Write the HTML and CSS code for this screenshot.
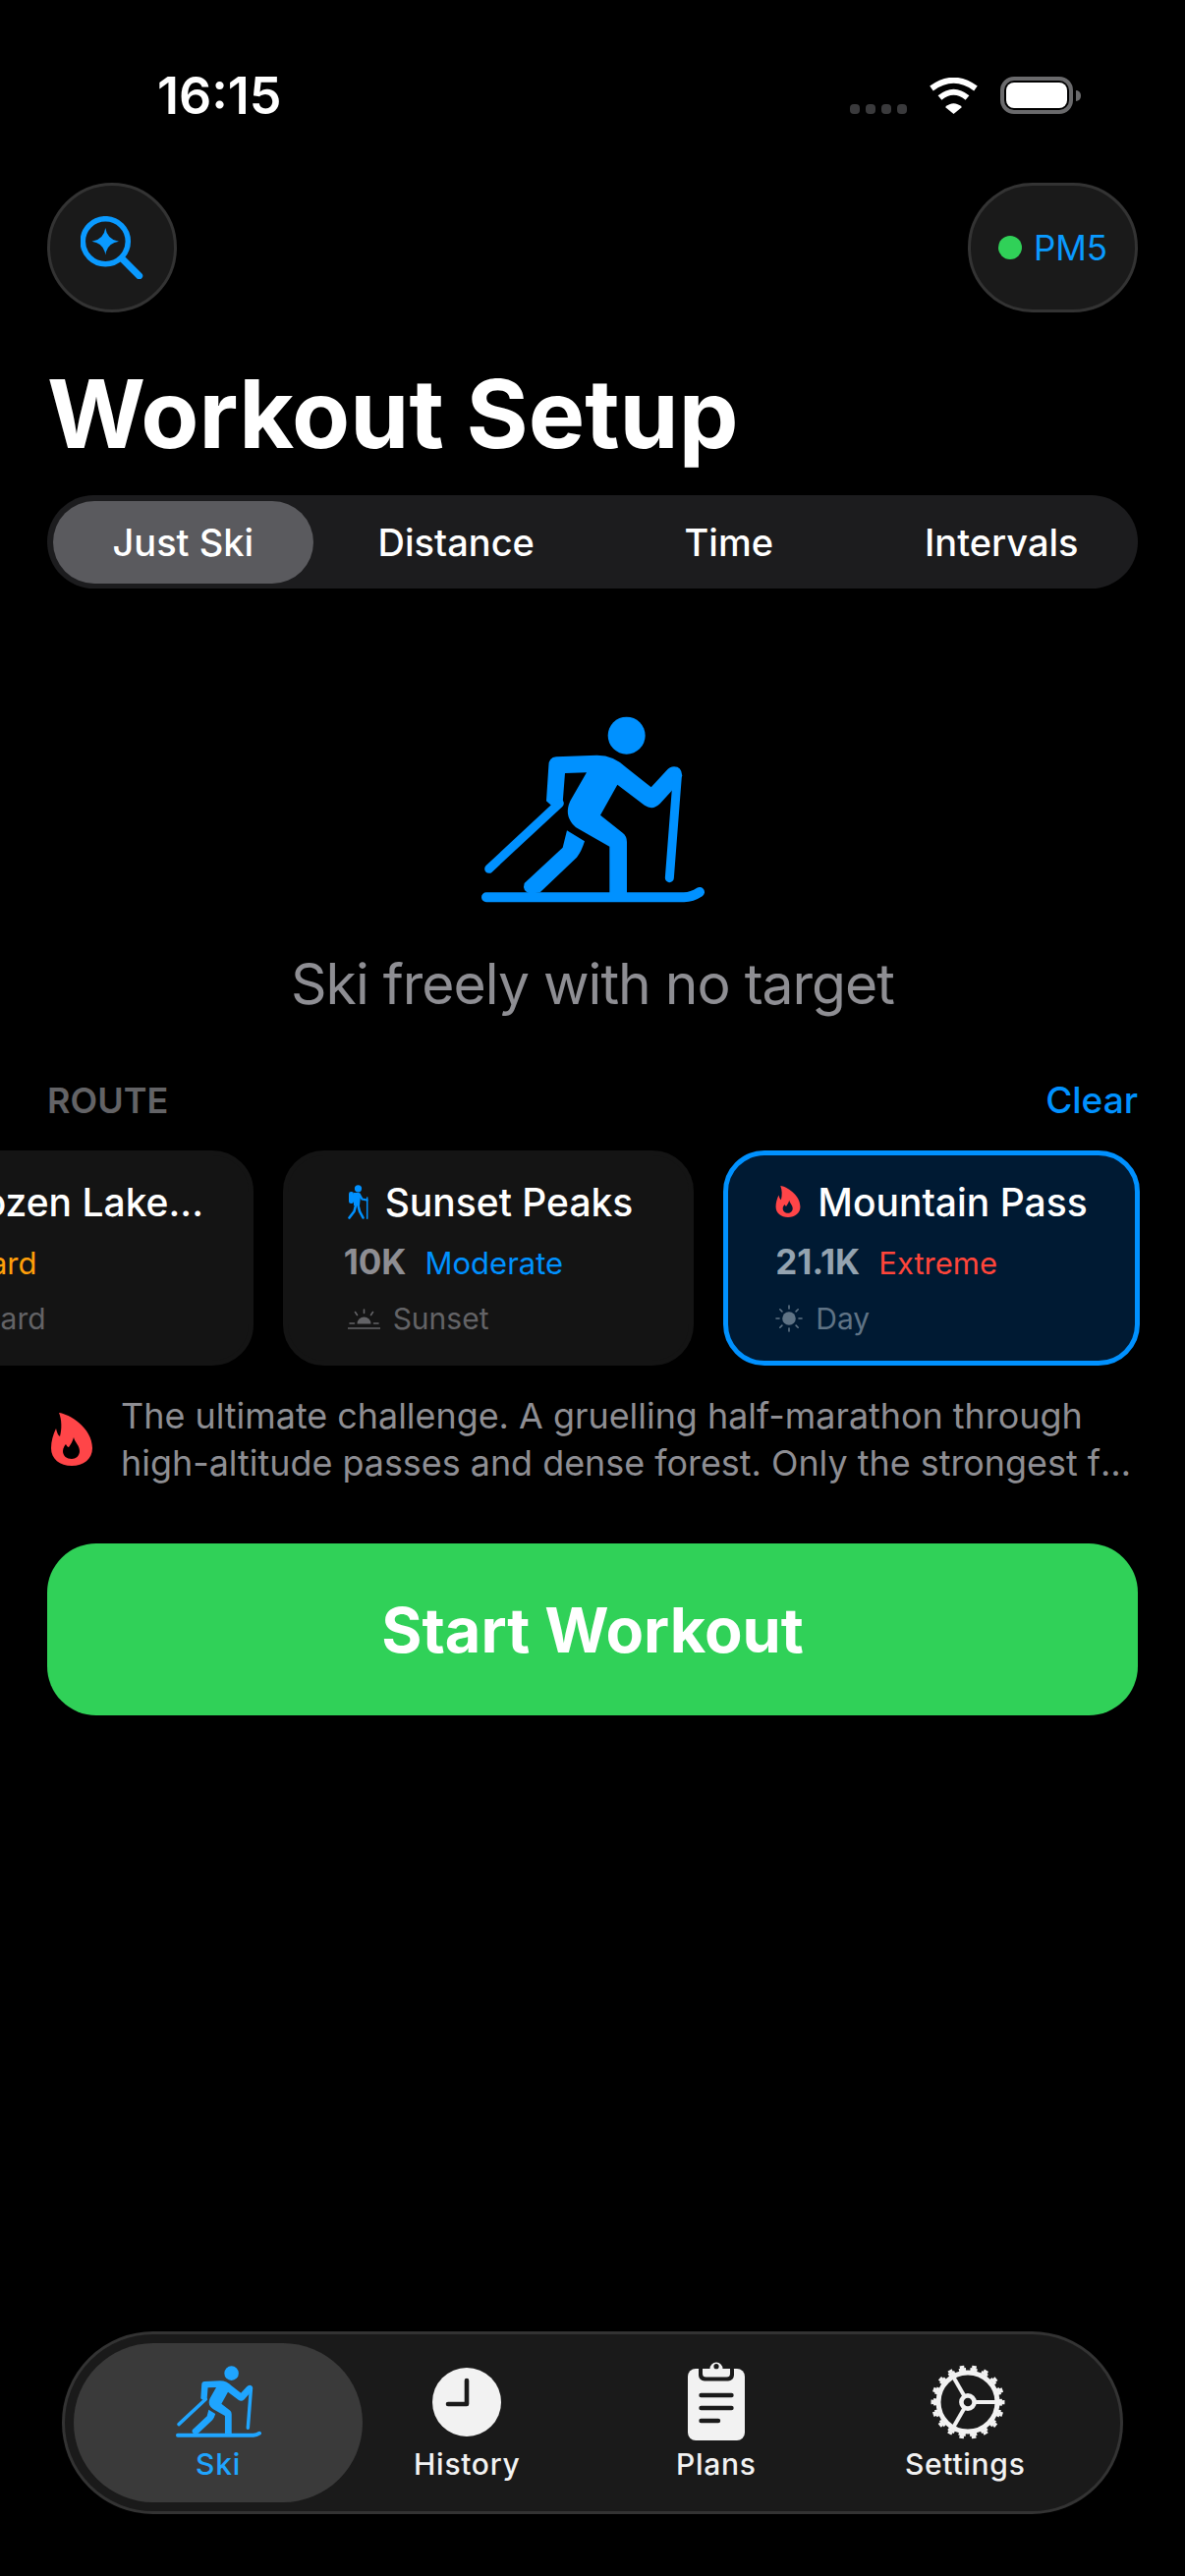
FILE: index.html
```html
<!DOCTYPE html>
<html lang="en">
<head>
    <meta charset="UTF-8">
    <meta name="viewport" content="width=device-width, initial-scale=1.0">
    <title>Workout Setup</title>
    <link rel="stylesheet" href="styles.css">
</head>
<body>
    <svg class="defs" width="0" height="0">
        <symbol id="skier" viewBox="147 87 681 568">
            <circle cx="590" cy="145" r="57" fill="currentColor"/>
            <path fill="currentColor" d="M375 210 Q352 212 352 238 L345 345 L360 358 L395 350 L402 260 L468 258 L418 345 Q400 385 425 415 Q432 424 445 431 L538 484 L538 630 L591 630 L591 470 Q591 452 578 442 L510 388 L562 295 L645 358 Q670 375 692 353 L727 315 L760 268 Q758 240 735 240 Q722 240 712 252 L665 303 L592 245 Q552 205 500 205 Z"/>
            <path fill="currentColor" d="M408 435 L462 468 Q452 500 438 517 L326 624 L296 628 Q270 620 278 596 L395 487 Z"/>
            <g fill="none" stroke="currentColor" stroke-linecap="round">
                <path stroke-width="27" d="M170 552 L385 352"/>
                <path stroke-width="27" d="M721 580 L745 270"/>
                <path stroke-width="30" d="M162 639 H765 Q790 638 813 623"/>
            </g>
        </symbol>
        <symbol id="flame" viewBox="0 0 42 54">
            <path fill="currentColor" fill-rule="evenodd" d="M8 0C18 1 42 15 42 36C42 47 33 54 21 54C9 54 0 47 0 36C0 29 2 22 5 16C6 20 7 23 9 24C11 17 11 7 8 0ZM23 25C24 30 29 33 29 39C29 44 25 47 21 47C16 47 12 44 12 39C12 36 14 33 15 32C16 34 17 35 18 35C20 32 22 29 23 25Z"/>
        </symbol>
    </svg>

    <div class="status">
        <span class="clock">16:15</span>
        <div class="status-icons">
            <div class="signal"><i></i><i></i><i></i><i></i></div>
            <svg class="wifi" viewBox="0 0 51 37">
                <g fill="none" stroke="#fff" stroke-width="6">
                    <path d="M3 11 Q25.5 -5.5 48 11"/>
                    <path d="M11.5 20.5 Q25.5 9 39.5 20.5"/>
                </g>
                <path fill="#fff" d="M17 30 Q25.5 22.5 34 30 L25.5 37 Z"/>
            </svg>
            <div class="battery"><div class="battery-fill"></div></div>
            <div class="battery-nub"></div>
        </div>
    </div>

    <div class="top-row">
        <button class="round-btn">
            <svg class="search-icon" viewBox="0 0 64 64">
                <circle cx="25.3" cy="25.7" r="23" fill="none" stroke="currentColor" stroke-width="5.5"/>
                <path d="M43 44 L59.7 60.7" fill="none" stroke="currentColor" stroke-width="7" stroke-linecap="round"/>
                <path fill="currentColor" d="M25.3 12 Q27 24 39 25.7 Q27 27.4 25.3 39.5 Q23.6 27.4 11.5 25.7 Q23.6 24 25.3 12Z"/>
            </svg>
        </button>
        <button class="pm-btn"><span class="dot"></span>PM5</button>
    </div>

    <h1 class="title">Workout Setup</h1>

    <div class="seg">
        <div class="seg-item seg-on">Just Ski</div>
        <div class="seg-item">Distance</div>
        <div class="seg-item">Time</div>
        <div class="seg-item">Intervals</div>
    </div>

    <svg class="hero-icon"><use href="#skier"/></svg>
    <p class="hero-text">Ski freely with no target</p>

    <div class="route-head">
        <span class="route-label">ROUTE</span>
        <span class="route-clear">Clear</span>
    </div>

    <div class="rail">
        <div class="track">
            <div class="card card-first">
                <div class="card-body">
                    <div class="card-title">
                        <svg class="flame-sm snow" viewBox="0 0 26 32"><circle cx="13" cy="16" r="10" fill="currentColor"/></svg>
                        <span>Frozen Lake...</span>
                    </div>
                    <div class="card-meta"><b>5K</b><span class="hard">Hard</span></div>
                    <div class="card-light">
                        <svg class="snow-light" viewBox="0 0 20 21"><circle cx="10" cy="10" r="7" fill="currentColor"/></svg>
                        <span>Blizzard</span>
                    </div>
                </div>
            </div>
            <div class="card">
                <div class="card-body">
                    <div class="card-title">
                        <svg class="hiker" viewBox="0 0 21 35">
                            <circle cx="10.5" cy="3.8" r="3.6" fill="#0091ff"/>
                            <rect x="1" y="7" width="5" height="12" rx="2.2" fill="#0091ff"/>
                            <path d="M6 8 H11 Q13 8 13 11 L12 21 L6 21 Z" fill="#0091ff"/>
                            <g fill="none" stroke="#0091ff" stroke-linecap="round">
                                <path stroke-width="2.6" d="M8 21 L6.5 27 L1.5 33.5"/>
                                <path stroke-width="2.6" d="M10.5 21 L12 27 L15.5 33.5"/>
                                <path stroke-width="2.2" d="M12 10 L14.5 14.5 L19.5 15.5"/>
                                <path stroke-width="1.5" d="M19.7 13 V34.2"/>
                            </g>
                        </svg>
                        <span>Sunset Peaks</span>
                    </div>
                    <div class="card-meta"><b>10K</b><span class="moderate">Moderate</span></div>
                    <div class="card-light">
                        <svg class="sunset" viewBox="0 0 33 21">
                            <path d="M9.5 15.5 A7 7 0 0 1 23.5 15.5 Z" fill="currentColor"/>
                            <g fill="none" stroke="currentColor" stroke-width="1.6" stroke-linecap="round">
                                <path d="M16.5 1 V4.5"/>
                                <path d="M7.5 3.5 L9.5 6.5"/>
                                <path d="M25.5 3.5 L23.5 6.5"/>
                                <path d="M2 15 H6.5"/>
                                <path d="M26.5 15 H31"/>
                                <path d="M0.5 20 H32.5"/>
                            </g>
                        </svg>
                        <span>Sunset</span>
                    </div>
                </div>
            </div>
            <div class="card card-on">
                <div class="card-body">
                    <div class="card-title">
                        <svg class="flame-sm"><use href="#flame"/></svg>
                        <span>Mountain Pass</span>
                    </div>
                    <div class="card-meta"><b>21.1K</b><span class="extreme">Extreme</span></div>
                    <div class="card-light">
                        <svg class="sun" viewBox="0 0 28 28">
                            <circle cx="14" cy="14" r="6.8" fill="currentColor"/>
                            <g fill="none" stroke="currentColor" stroke-width="1.6" stroke-linecap="round">
                                <path d="M14 1 V4"/>
                                <path d="M14 24 V27"/>
                                <path d="M1 14 H4"/>
                                <path d="M24 14 H27"/>
                                <path d="M4.8 4.8 L6.9 6.9"/>
                                <path d="M21.1 21.1 L23.2 23.2"/>
                                <path d="M23.2 4.8 L21.1 6.9"/>
                                <path d="M6.9 21.1 L4.8 23.2"/>
                            </g>
                        </svg>
                        <span>Day</span>
                    </div>
                </div>
            </div>
        </div>
    </div>

    <div class="desc">
        <svg class="flame-lg"><use href="#flame"/></svg>
        <div class="desc-text">
            <p class="desc-line">The ultimate challenge. A gruelling half-marathon through</p>
            <p class="desc-line">high-altitude passes and dense forest. Only the strongest finish the climb.</p>
        </div>
    </div>

    <button class="start">Start Workout</button>

    <nav class="tabs">
        <div class="tab tab-on">
            <svg class="tab-ski"><use href="#skier"/></svg>
            <span>Ski</span>
        </div>
        <div class="tab">
            <svg class="tab-clock" viewBox="0 0 70 70">
                <circle cx="35" cy="35" r="35" fill="#f2f2f2"/>
                <path d="M35 13 V37 H16" fill="none" stroke="#1a1a1a" stroke-width="4.6" stroke-linecap="round" stroke-linejoin="round"/>
            </svg>
            <span>History</span>
        </div>
        <div class="tab">
            <svg class="tab-plans" viewBox="0 0 58 82">
                <rect x="0" y="9" width="58" height="73" rx="8" fill="#f2f2f2"/>
                <rect x="11" y="4" width="36" height="17.5" rx="6" fill="#1a1a1a"/>
                <path d="M15 9 H22.5 A6.5 6.5 0 0 1 35.5 9 H43 V14 Q43 17.5 39.5 17.5 H18.5 Q15 17.5 15 14 Z" fill="#f2f2f2"/>
                <circle cx="29" cy="6.7" r="2.6" fill="#1a1a1a"/>
                <g fill="none" stroke="#1a1a1a" stroke-width="4.4" stroke-linecap="round">
                    <path d="M13.5 36 H44.5"/>
                    <path d="M13.5 49 H44.5"/>
                    <path d="M13.5 62 H31"/>
                </g>
            </svg>
            <span>Plans</span>
        </div>
        <div class="tab">
            <svg class="tab-gear" viewBox="0 0 76 76">
                <g fill="none" stroke="#f2f2f2">
                    <circle cx="38" cy="38" r="33.5" stroke-width="3" stroke-dasharray="7.2 4.494" stroke-dashoffset="3.6"/>
                    <circle cx="38" cy="38" r="36" stroke-width="3" stroke-dasharray="4.6 7.966" stroke-dashoffset="2.3"/>
                    <circle cx="38" cy="38" r="30" stroke-width="5"/>
                    <circle cx="38" cy="38" r="6.6" stroke-width="4.6"/>
                    <path stroke-width="4" d="M44 38 H66"/>
                    <path stroke-width="4" d="M34.7 32.3 L23 12"/>
                    <path stroke-width="4" d="M34.7 43.7 L23 64"/>
                </g>
            </svg>
            <span>Settings</span>
        </div>
    </nav>
</body>
</html>
```

FILE: styles.css
```css
* {
    box-sizing: border-box;
}
html, body {
    margin: 0;
    height: 100%;
}
body {
    background-color: #000;
    color: #fff;
    font-family: Inter, "Liberation Sans", sans-serif;
    display: flex;
    flex-direction: column;
    overflow: hidden;
}
p, h1 {
    margin: 0;
}
button {
    font-family: inherit;
    border: none;
    padding: 0;
}
.defs {
    position: absolute;
}

/* status bar */
.status {
    height: 186px;
    flex: none;
    padding: 73px 114px 0 160px;
    display: flex;
    justify-content: space-between;
    align-items: flex-start;
}
.clock {
    font-size: 52px;
    line-height: 50px;
    font-weight: 600;
}
.status-icons {
    display: flex;
    align-items: flex-end;
    height: 38px;
    margin-top: 5px;
    position: relative;
}
.signal {
    display: flex;
    gap: 6px;
    margin-right: 22px;
}
.signal i {
    width: 10px;
    height: 10px;
    border-radius: 4px;
    background-color: #3a3a3c;
}
.wifi {
    width: 51px;
    height: 37px;
    margin-right: 22px;
}
.battery {
    width: 74px;
    height: 38px;
    border: 4px solid #6a6a6c;
    border-radius: 14px;
    padding: 2px;
}
.battery-fill {
    width: 100%;
    height: 100%;
    background-color: #fff;
    border-radius: 8px;
}
.battery-nub {
    position: absolute;
    right: -8px;
    top: 14px;
    width: 5px;
    height: 11px;
    background-color: #6a6a6c;
    border-radius: 0 5px 5px 0;
}

/* header */
.top-row {
    display: flex;
    justify-content: space-between;
    padding: 0 48px;
}
.round-btn {
    width: 132px;
    height: 132px;
    border-radius: 50%;
    background-color: #1a1a1a;
    border: 3px solid #333;
    color: #0a9aff;
    display: flex;
    align-items: center;
    justify-content: center;
}
.search-icon {
    width: 64px;
    height: 64px;
}
.pm-btn {
    width: 173px;
    height: 132px;
    border-radius: 66px;
    background-color: #1a1a1a;
    border: 3px solid #333;
    color: #0a9aff;
    font-size: 35px;
    display: flex;
    align-items: center;
    justify-content: center;
    gap: 12px;
}
.dot {
    width: 24px;
    height: 24px;
    border-radius: 50%;
    background-color: #30d158;
}
.title {
    margin-top: 55px;
    padding-left: 48px;
    font-size: 96.5px;
    line-height: 96px;
    font-weight: 700;
}

/* segmented control */
.seg {
    margin: 35px 48px 0;
    height: 95px;
    border-radius: 48px;
    background-color: #1c1c1e;
    display: grid;
    grid-template-columns: repeat(4, 1fr);
    flex: none;
}
.seg-item {
    font-size: 38px;
    font-weight: 500;
    display: flex;
    align-items: center;
    justify-content: center;
}
.seg-on {
    background-color: #5a5a5e;
    border-radius: 42px;
    margin: 6px 7px 5px 6px;
}

/* hero */
.hero-icon {
    width: 227px;
    height: 190px;
    color: #0091ff;
    margin: 130px auto 0;
    flex: none;
    display: block;
}
.hero-text {
    margin-top: 47px;
    font-size: 57px;
    letter-spacing: -1px;
    line-height: 72px;
    color: #8e8e93;
    text-align: center;
}

/* route picker */
.route-head {
    margin-top: 60px;
    padding: 0 48px;
    display: flex;
    justify-content: space-between;
    line-height: 44px;
}
.route-label {
    font-size: 36px;
    font-weight: 600;
    color: #636366;
}
.route-clear {
    font-size: 37px;
    font-weight: 500;
    color: #0091ff;
}
.rail {
    margin-top: 29px;
    overflow: hidden;
    flex: none;
}
.track {
    display: flex;
    gap: 30px;
    margin-left: -160px;
    width: 1400px;
}
.card {
    width: 418px;
    height: 219px;
    border: 5px solid #141414;
    border-radius: 42px;
    background-color: #141414;
    padding-top: 24px;
    display: flex;
    justify-content: center;
}
.card-first {
    justify-content: flex-end;
    padding-right: 46px;
}
.card-first .card-meta {
    gap: 16px;
}
.card-on {
    width: 424px;
    border-color: #0091ff;
    background-color: #001a33;
}
.card-title {
    display: flex;
    align-items: center;
    gap: 17px;
    height: 46px;
    font-size: 39px;
    font-weight: 500;
}
.card-meta {
    display: flex;
    align-items: baseline;
    gap: 19px;
    margin-top: 18px;
    font-size: 31px;
    line-height: 40px;
}
.card-meta b {
    font-size: 35px;
    font-weight: 700;
    color: #8e8e93;
}
.card-on .card-meta b {
    color: #94a3b0;
}
.card-light {
    display: flex;
    align-items: center;
    gap: 13px;
    margin-top: 16px;
    font-size: 30px;
    line-height: 40px;
    color: #636366;
}
.card-on .card-light {
    color: #5f7385;
}
.hard {
    color: #ff9f0a;
}
.moderate {
    color: #0091ff;
}
.extreme {
    color: #ff453a;
}
.flame-sm {
    width: 26px;
    height: 32px;
    color: #ff4548;
}
.snow {
    color: #64d2ff;
}
.snow-light {
    width: 17px;
    height: 21px;
}
.hiker {
    width: 21px;
    height: 35px;
    margin-left: 4px;
}
.sunset {
    width: 33px;
    height: 21px;
    margin-left: 4px;
}
.sun {
    width: 28px;
    height: 28px;
}

/* description */
.desc {
    margin-top: 27px;
    padding: 0 50px 0 52px;
    display: flex;
    align-items: center;
    gap: 29px;
}
.flame-lg {
    width: 42px;
    height: 54px;
    color: #ff4548;
    flex: none;
}
.desc-text {
    min-width: 0;
    flex: 1;
}
.desc-line {
    font-size: 35.9px;
    line-height: 48px;
    color: #8e8e93;
    white-space: nowrap;
    overflow: hidden;
    text-overflow: ellipsis;
}
.start {
    margin: 58px 48px 0;
    height: 175px;
    flex: none;
    border-radius: 50px;
    background-color: #30d158;
    color: #fff;
    font-size: 63px;
    font-weight: 700;
}

/* tab bar */
.tabs {
    margin: auto 63px 63px;
    height: 186px;
    flex: none;
    border-radius: 93px;
    background-color: #1a1a1a;
    border: 3px solid #333;
    padding: 9px;
    display: flex;
}
.tab {
    width: 253.5px;
    height: 162px;
    display: flex;
    flex-direction: column;
    align-items: center;
    font-size: 30px;
    font-weight: 500;
    letter-spacing: 0.7px;
    color: #f2f2f2;
    position: relative;
}
.tab span {
    position: absolute;
    top: 105px;
    line-height: 36px;
}
.tab-on {
    width: 294px;
    margin-right: -20.5px;
    background-color: #3a3a3a;
    border-radius: 81px;
    color: #1fa5ff;
}
.tab-ski {
    width: 87px;
    height: 73px;
    margin-top: 23px;
    color: #1fa5ff;
}
.tab-clock {
    width: 70px;
    height: 70px;
    margin-top: 25px;
}
.tab-plans {
    width: 58px;
    height: 82px;
    margin-top: 17px;
}
.tab-gear {
    width: 76px;
    height: 76px;
    margin-top: 22px;
    margin-left: 6px;
}
```
